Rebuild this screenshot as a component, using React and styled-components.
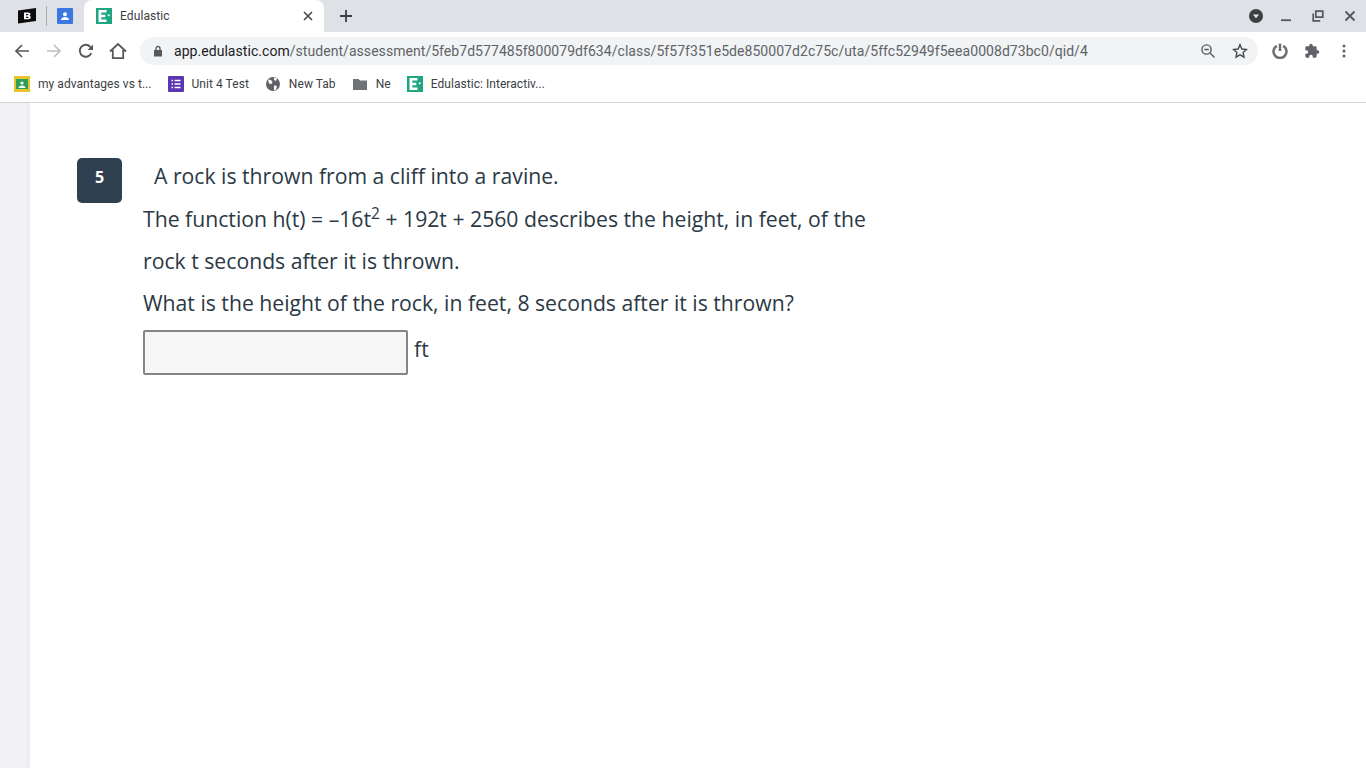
import React from 'react';
import styled, { createGlobalStyle } from 'styled-components';

const Global = createGlobalStyle`
  html, body { margin: 0; padding: 0; height: 100%; overflow: hidden; background: #fff; }
  #root { height: 100%; }
`;

const Page = styled.div`
  display: flex;
  flex-direction: column;
  width: 1366px;
  height: 768px;
  font-family: Roboto, 'Liberation Sans', sans-serif;
`;

const TabStrip = styled.div`
  display: flex;
  align-items: flex-start;
  height: 32px;
  background: #dee1e6;
  flex: none;
`;

const PinnedTab = styled.div`
  display: flex;
  align-items: center;
  justify-content: center;
  width: ${(p) => p.$w || 38}px;
  height: 32px;
  flex: none;
  margin-left: ${(p) => p.$ml || 0}px;
`;

const TabDivider = styled.div`
  width: 1px;
  height: 20px;
  margin-top: 6px;
  background: #a9adb2;
  flex: none;
`;

const ActiveTab = styled.div`
  display: flex;
  align-items: center;
  width: 240px;
  height: 32px;
  margin-left: 1px;
  padding: 0 8px 0 12px;
  box-sizing: border-box;
  background: #fff;
  border-radius: 8px 8px 0 0;
  flex: none;
`;

const TabTitle = styled.span`
  flex: 1;
  margin-left: 8px;
  font-size: 12px;
  letter-spacing: 0.1px;
  color: #3c4043;
`;

const NewTab = styled.div`
  display: flex;
  align-items: center;
  justify-content: center;
  width: 28px;
  height: 32px;
  margin-left: 8px;
  flex: none;
`;

const WindowControls = styled.div`
  display: flex;
  align-items: center;
  height: 32px;
  margin-left: auto;
`;

const ControlSlot = styled.div`
  display: flex;
  align-items: center;
  justify-content: center;
  width: ${(p) => p.$w || 32}px;
  height: 32px;
`;

const Toolbar = styled.div`
  display: flex;
  align-items: center;
  height: 38px;
  background: #fff;
  flex: none;
`;

const NavButton = styled.div`
  display: flex;
  align-items: center;
  justify-content: center;
  width: 32px;
  height: 32px;
  flex: none;
`;

const NavGroup = styled.div`
  display: flex;
  align-items: center;
  padding-left: 6px;
`;

const ToolGroup = styled.div`
  display: flex;
  align-items: center;
  padding-left: 6px;
`;

const Omnibox = styled.div`
  display: flex;
  align-items: center;
  width: 1118px;
  height: 28px;
  margin-left: 6px;
  padding: 0 2px 0 12px;
  box-sizing: border-box;
  background: #f1f3f4;
  border-radius: 14px;
  flex: none;
`;

const Url = styled.div`
  flex: 1;
  margin-left: 10px;
  font-size: 14px;
  letter-spacing: 0.05px;
  color: #5f6368;
  white-space: nowrap;
`;

const Host = styled.span`
  color: #202124;
`;

const Bookmarks = styled.div`
  display: flex;
  align-items: center;
  height: 33px;
  padding: 0 0 4px 14px;
  background: #fff;
  border-bottom: 1px solid #d2d3d5;
  box-sizing: border-box;
  flex: none;
`;

const Bookmark = styled.div`
  display: flex;
  align-items: center;
  margin-right: 16px;
  font-size: 12px;
  letter-spacing: 0.05px;
  color: #3c4043;
  white-space: nowrap;
  gap: 8px;
`;

const Body = styled.div`
  display: flex;
  flex: 1;
  min-height: 0;
`;

const Rail = styled.div`
  width: 30px;
  background: #f2f2f6;
  box-shadow: inset -3px 0 3px rgba(0, 0, 0, 0.025);
  flex: none;
`;

const Content = styled.div`
  display: flex;
  align-items: flex-start;
  padding: 55px 0 0 47px;
  font-family: 'Open Sans', sans-serif;
  color: #2b3945;
`;

const NumberBadge = styled.div`
  display: flex;
  justify-content: center;
  width: 45px;
  height: 45px;
  padding-top: 8px;
  box-sizing: border-box;
  border-radius: 5px;
  background: #2f4151;
  color: #fff;
  font-size: 16px;
  line-height: 22px;
  font-weight: 700;
  flex: none;
`;

const Question = styled.div`
  margin-left: 21px;
  width: 740px;
`;

const Line = styled.div`
  font-size: 21.2px;
  line-height: 42px;
  white-space: nowrap;
  margin-left: ${(p) => p.$indent || 0}px;
  height: 42px;
  &:first-child {
    margin-top: -3px;
    height: 43px;
  }
`;

const Sup = styled.sup`
  font-size: 15.5px;
  line-height: 0;
`;

const AnswerRow = styled.div`
  display: flex;
  align-items: flex-start;
  margin-top: 6px;
`;

const AnswerBox = styled.div`
  width: 265px;
  height: 45px;
  box-sizing: border-box;
  background: #f6f6f6;
  border: 2px solid #858585;
  border-radius: 2px;
`;

const Unit = styled.span`
  margin-left: 6px;
  font-size: 21.2px;
  line-height: 38px;
`;

const EduIcon = ({ size = 16 }) => (
  <svg width={size} height={size} viewBox="0 0 16 16">
    <rect width="16" height="16" fill="#1fa57f" />
    <path d="M2.500 2h8v2.600H5.300v2.100h4v2.500h-4v2.200h5.200V14h-8z" fill="#fff" />
    <rect x="11.800" y="6.400" width="1.800" height="1.800" fill="#fff" />
  </svg>
);

const App = () => (
  <Page>
    <Global />
    <TabStrip>
      <PinnedTab $ml={8}>
        <svg width="18" height="16" viewBox="0 0 18 16">
          <path d="M0 2.500 18 0V13L0 15.500z" fill="#0b0b0b" />
          <path d="M6 4.500h4.200c1.500 0 2.200.8 2.200 1.800 0 .7-.4 1.200-1 1.400.8.2 1.300.8 1.300 1.600 0 1.200-.9 2-2.400 2H6zm2 1.500v1.200h1.600c.5 0 .8-.2.8-.6s-.3-.6-.8-.6zm0 2.700v1.300h1.800c.5 0 .9-.2.9-.65s-.4-.65-.9-.65z" fill="#fff" />
        </svg>
      </PinnedTab>
      <TabDivider />
      <PinnedTab $w={36}>
        <svg width="16" height="16" viewBox="0 0 16 16">
          <rect width="16" height="16" rx="1" fill="#3b78e0" />
          <circle cx="8" cy="6.200" r="2" fill="#fff" />
          <path d="M4 12c0-2 2-3 4-3s4 1 4 3z" fill="#fff" />
        </svg>
      </PinnedTab>
      <ActiveTab>
        <EduIcon />
        <TabTitle>Edulastic</TabTitle>
        <svg width="16" height="16" viewBox="0 0 16 16">
          <path d="M4 4l8 8M12 4l-8 8" stroke="#45494d" strokeWidth="1.600" />
        </svg>
      </ActiveTab>
      <NewTab>
        <svg width="14" height="14" viewBox="0 0 14 14">
          <path d="M7 1v12M1 7h12" stroke="#3c4043" strokeWidth="1.800" />
        </svg>
      </NewTab>
      <WindowControls>
        <ControlSlot $w={28}>
          <svg width="16" height="16" viewBox="0 0 16 16">
            <circle cx="8" cy="8" r="7" fill="#3c4043" />
            <path d="M4.800 6.400h6.400L8 10.200z" fill="#dee1e6" />
          </svg>
        </ControlSlot>
        <ControlSlot>
          <svg width="12" height="12" viewBox="0 0 12 12">
            <path d="M1 10.200h10" stroke="#55595d" strokeWidth="1.800" />
          </svg>
        </ControlSlot>
        <ControlSlot>
          <svg width="12" height="12" viewBox="0 0 12 12">
            <path d="M3.800 7.200V1.200h7v6zM1.200 3.500v7.300h7" fill="none" stroke="#55595d" strokeWidth="1.700" />
          </svg>
        </ControlSlot>
        <ControlSlot>
          <svg width="12" height="12" viewBox="0 0 12 12">
            <path d="M1.500 1.500l9 9M10.500 1.500l-9 9" stroke="#55595d" strokeWidth="1.800" />
          </svg>
        </ControlSlot>
      </WindowControls>
    </TabStrip>
    <Toolbar>
      <NavGroup>
        <NavButton>
          <svg width="16" height="16" viewBox="0 0 16 16">
            <path d="M15 8H2M8 2L2 8l6 6" fill="none" stroke="#55595d" strokeWidth="1.700" />
          </svg>
        </NavButton>
        <NavButton>
          <svg width="16" height="16" viewBox="0 0 16 16">
            <path d="M1 8h13M8 2l6 6-6 6" fill="none" stroke="#bdc0c3" strokeWidth="1.700" />
          </svg>
        </NavButton>
        <NavButton>
          <svg width="16" height="16" viewBox="0 0 16 16">
            <path d="M13.300 10.200A6 6 0 1 1 12.300 3.800L14.500 6" fill="none" stroke="#55595d" strokeWidth="1.900" />
            <path d="M15 1.600V7H9.600z" fill="#55595d" />
          </svg>
        </NavButton>
        <NavButton>
          <svg width="18" height="18" viewBox="0 0 18 18">
            <path d="M1 9.500L9 2l8 7.500M3.800 8v8.200h10.400V8" fill="none" stroke="#55595d" strokeWidth="1.800" />
          </svg>
        </NavButton>
      </NavGroup>
      <Omnibox>
        <svg width="12" height="12" viewBox="0 0 12 12">
          <path d="M2 5h8v6.500H2z" fill="#55595d" />
          <path d="M4 5V3.500a2 2 0 0 1 4 0V5" fill="none" stroke="#55595d" strokeWidth="1.300" />
        </svg>
        <Url>
          <Host>app.edulastic.com</Host>/student/assessment/5feb7d577485f800079df634/class/5f57f351e5de850007d2c75c/uta/5ffc52949f5eea0008d73bc0/qid/4
        </Url>
        <NavButton>
          <svg width="16" height="16" viewBox="0 0 16 16">
            <circle cx="6.500" cy="6.500" r="4.600" fill="none" stroke="#55595d" strokeWidth="1.400" />
            <path d="M4.300 6.500h4.400M10 10l4.500 4.500" stroke="#55595d" strokeWidth="1.400" />
          </svg>
        </NavButton>
        <NavButton>
          <svg width="16" height="16" viewBox="0 0 16 16">
            <path d="M8 1.800l1.900 4.200 4.600.5-3.400 3.100.9 4.600L8 11.900l-4 2.300.9-4.600L1.500 6.500l4.600-.5z" fill="none" stroke="#45494d" strokeWidth="1.400" />
          </svg>
        </NavButton>
      </Omnibox>
      <ToolGroup>
        <NavButton>
          <svg width="16" height="16" viewBox="0 0 16 16">
            <path d="M4.800 2.800A6.500 6.500 0 1 0 11.200 2.800" fill="none" stroke="#6b6f73" strokeWidth="2.500" />
            <path d="M8 0.600V8" stroke="#6b6f73" strokeWidth="2.500" />
          </svg>
        </NavButton>
        <NavButton>
          <svg width="16" height="16" viewBox="0 0 24 24">
            <path d="M20.500 11H19V7a2 2 0 0 0-2-2h-4V3.500a2.500 2.500 0 0 0-5 0V5H4a2 2 0 0 0-2 2v3.800h1.500a2.700 2.700 0 0 1 0 5.400H2V20a2 2 0 0 0 2 2h3.800v-1.500a2.700 2.700 0 0 1 5.400 0V22H17a2 2 0 0 0 2-2v-4h1.500a2.500 2.500 0 0 0 0-5z" fill="#5f6368" />
          </svg>
        </NavButton>
        <NavButton>
          <svg width="16" height="16" viewBox="0 0 16 16">
            <circle cx="8" cy="3" r="1.500" fill="#5f6368" />
            <circle cx="8" cy="8" r="1.500" fill="#5f6368" />
            <circle cx="8" cy="13" r="1.500" fill="#5f6368" />
          </svg>
        </NavButton>
      </ToolGroup>
    </Toolbar>
    <Bookmarks>
      <Bookmark>
        <svg width="16" height="16" viewBox="0 0 16 16">
          <rect width="16" height="16" fill="#e8c52e" />
          <rect x="2" y="3" width="12" height="10" fill="#2f9e57" />
          <circle cx="8" cy="7" r="1.600" fill="#fff" />
          <path d="M4.500 12c0-1.500 1.500-2.500 3.500-2.500s3.500 1 3.500 2.500z" fill="#fff" />
        </svg>
        my advantages vs t...
      </Bookmark>
      <Bookmark>
        <svg width="16" height="16" viewBox="0 0 16 16">
          <rect width="16" height="16" rx="1" fill="#5e35b1" />
          <path d="M3.500 4.500h1.500M6.500 4.500h6M3.500 8h1.500M6.500 8h6M3.500 11.500h1.500M6.500 11.500h6" stroke="#fff" strokeWidth="1.500" />
        </svg>
        Unit 4 Test
      </Bookmark>
      <Bookmark>
        <svg width="16" height="16" viewBox="0 0 16 16">
          <circle cx="8" cy="8" r="7" fill="#5f6368" />
          <path d="M3 3.500l3 .5 1.500 2-1 2-2.500-.5zM9 9.500l3 .5-1 3.500-2 1zM9 1.500l3 1-1 2.500-2-1z" fill="#fff" />
        </svg>
        New Tab
      </Bookmark>
      <Bookmark>
        <svg width="16" height="16" viewBox="0 0 16 16">
          <path d="M1 3h5.500L8 4.500h7V14H1z" fill="#6f7276" />
        </svg>
        Ne
      </Bookmark>
      <Bookmark>
        <EduIcon />
        Edulastic: Interactiv...
      </Bookmark>
    </Bookmarks>
    <Body>
      <Rail />
      <Content>
        <NumberBadge>5</NumberBadge>
        <Question>
          <Line $indent={11}>A rock is thrown from a cliff into a ravine.</Line>
          <Line>
            The function h(t) = –16t<Sup>2</Sup> + 192t + 2560 describes the height, in feet, of the
          </Line>
          <Line>rock t seconds after it is thrown.</Line>
          <Line>What is the height of the rock, in feet, 8 seconds after it is thrown?</Line>
          <AnswerRow>
            <AnswerBox />
            <Unit>ft</Unit>
          </AnswerRow>
        </Question>
      </Content>
    </Body>
  </Page>
);

export default App;
